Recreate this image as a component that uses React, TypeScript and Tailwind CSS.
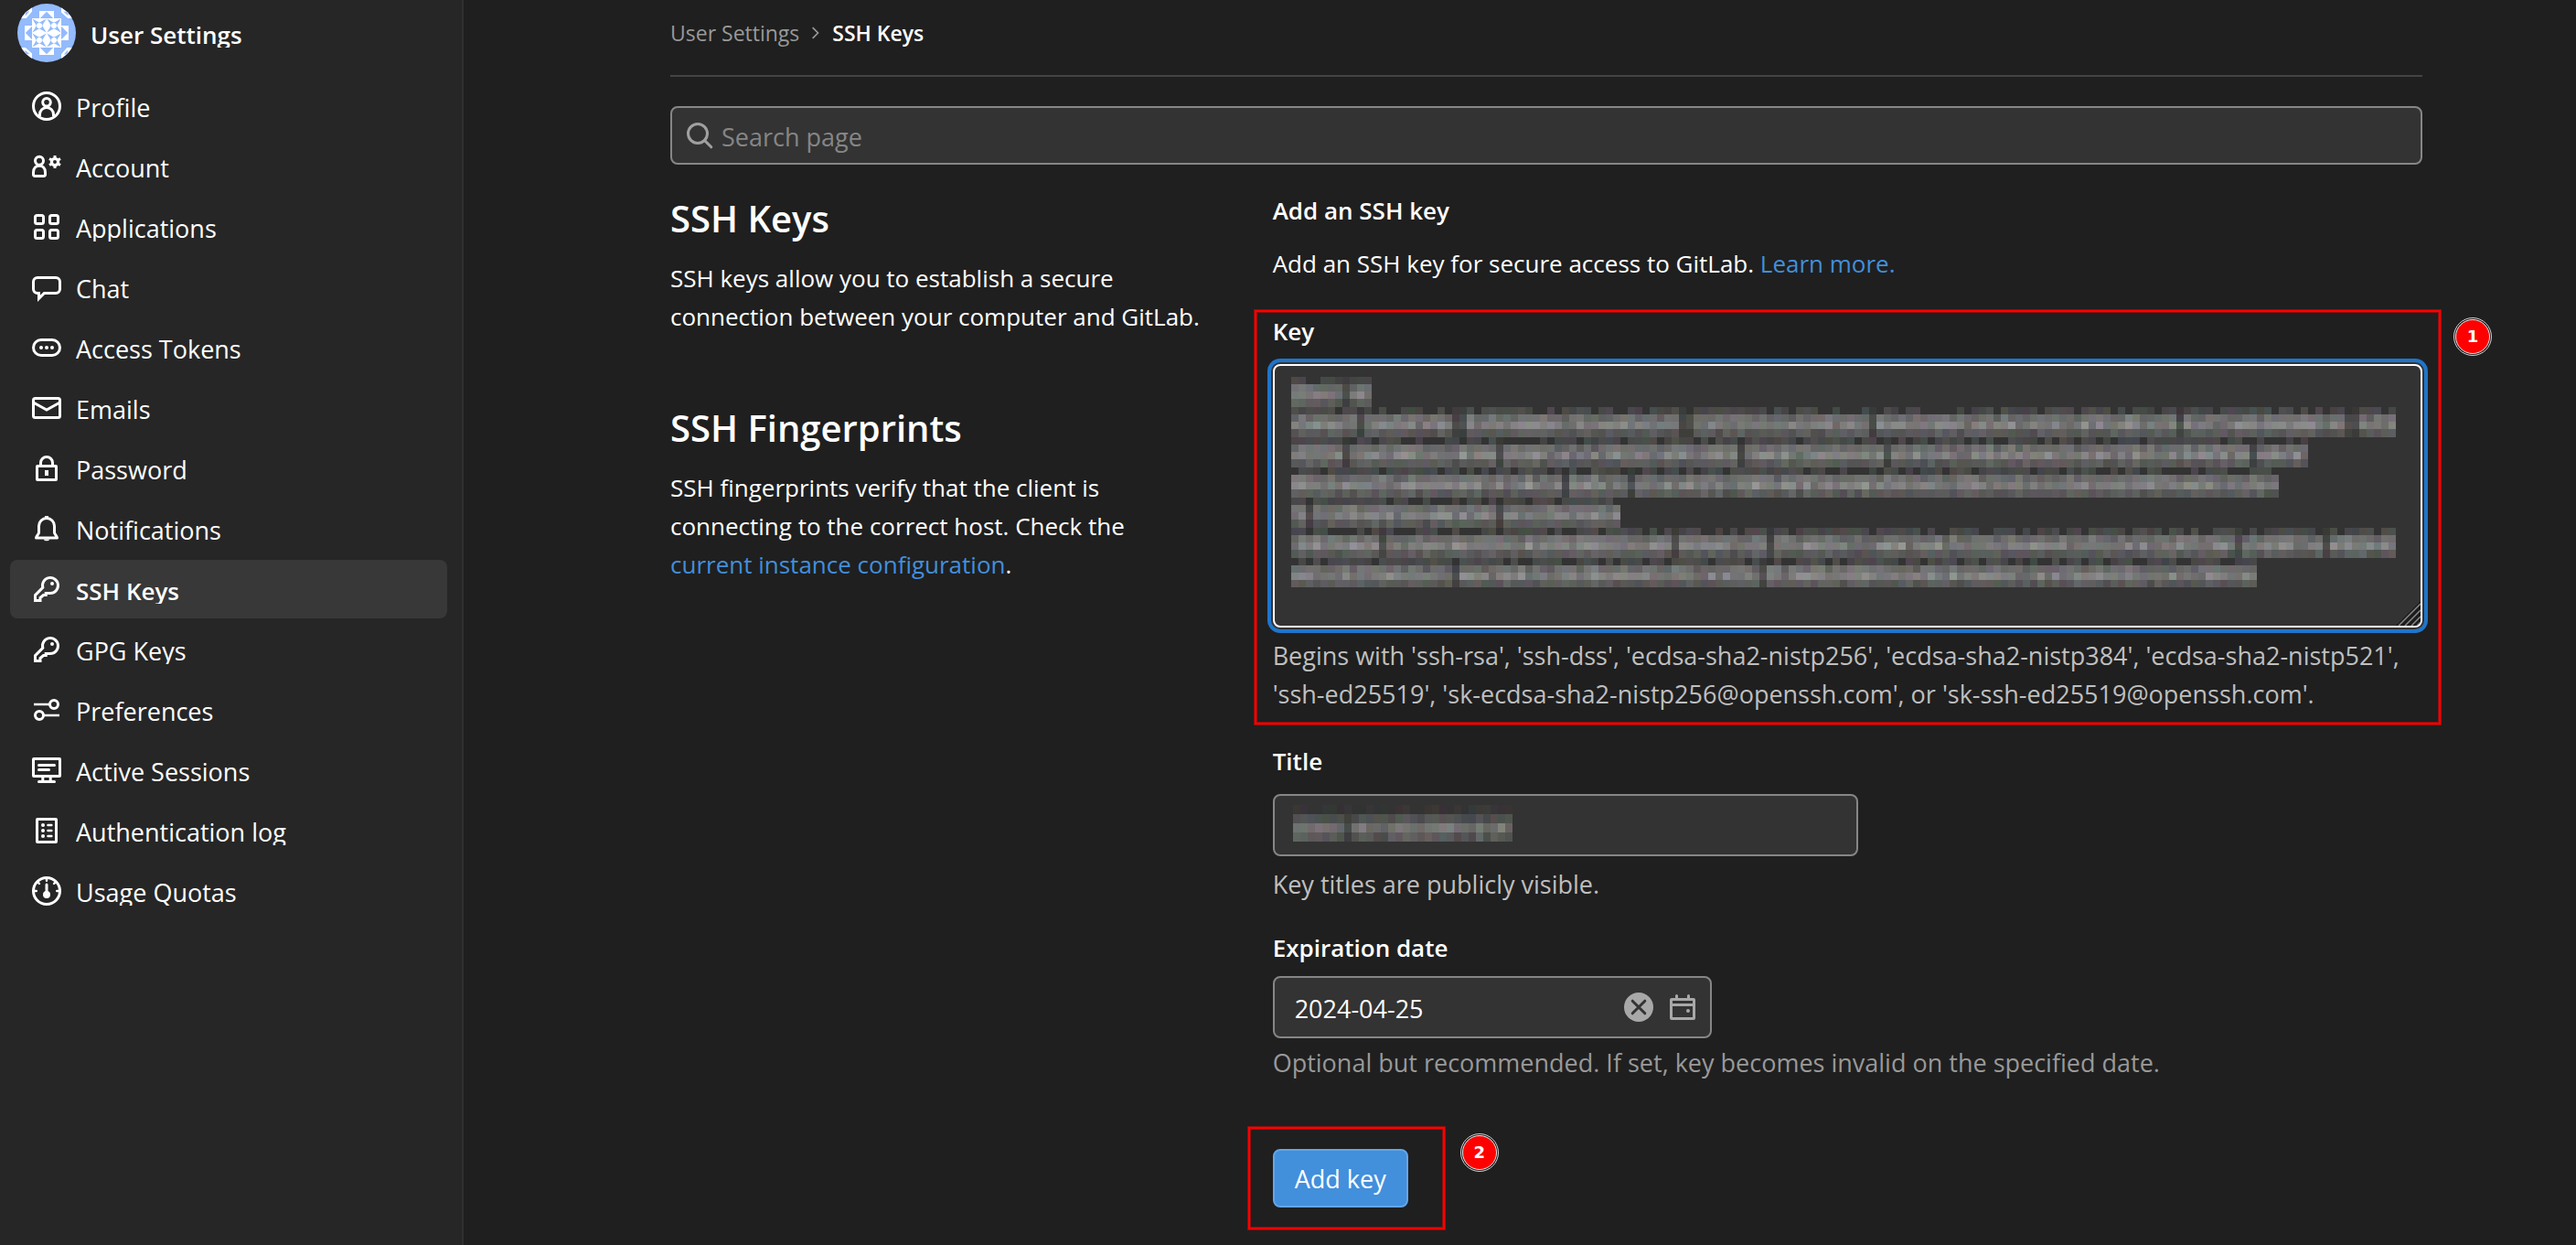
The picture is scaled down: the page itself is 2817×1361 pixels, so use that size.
import React from "react";

type IconProps = { className?: string; children: React.ReactNode };

function Icon({ className = "", children }: IconProps) {
  return (
    <svg
      viewBox="0 0 16 16"
      aria-hidden="true"
      className={`size-8 shrink-0 ${className}`}
      fill="none"
      stroke="currentColor"
      strokeWidth="1.5"
    >
      {children}
    </svg>
  );
}

const keyShape = (
  <>
    <path d="M10 10.25a4.25 4.25 0 1 0-4.1-3.1L1.75 11.3v2.95H4.5v-1.5l1.75-1.5H7.6v-1z" />
    <circle cx="11" cy="5" r="1" fill="currentColor" stroke="none" />
  </>
);

const navItems: { label: string; shape: React.ReactNode; active?: boolean }[] = [
  {
    label: "Profile",
    shape: (
      <>
        <circle cx="8" cy="8" r="7.25" />
        <circle cx="8" cy="5.9" r="2.15" />
        <path d="M4.25 13.6v-1.1a3.75 3.75 0 0 1 7.5 0v1.1" />
      </>
    ),
  },
  {
    label: "Account",
    shape: (
      <>
        <circle cx="4" cy="4.9" r="2.25" />
        <path d="M.75 11.2c0-2.4 1.4-3.6 3.25-3.6s3.25 1.2 3.25 3.6v1.3a.75.75 0 0 1-.75.75h-5a.75.75 0 0 1-.75-.75z" />
        <circle cx="12.5" cy="5.5" r="1.8" strokeWidth="1.6" />
        <path d="M12.5 2v1.4M12.5 7.6V9M9.5 3.75l1.2.7M14.3 6.55l1.2.7M9.5 7.25l1.2-.7M14.3 4.45l1.2-.7" />
      </>
    ),
  },
  {
    label: "Applications",
    shape: (
      <>
        <rect x="1.75" y="1.75" width="4.5" height="4.5" rx="1" />
        <rect x="9.75" y="1.75" width="4.5" height="4.5" rx="1" />
        <rect x="1.75" y="9.75" width="4.5" height="4.5" rx="1" />
        <rect x="9.75" y="9.75" width="4.5" height="4.5" rx="1" />
      </>
    ),
  },
  {
    label: "Chat",
    shape: (
      <path d="M3 2.75h10A2.25 2.25 0 0 1 15.25 5v4A2.25 2.25 0 0 1 13 11.25H6.7l-2.95 2.9v-2.9H3A2.25 2.25 0 0 1 .75 9V5A2.25 2.25 0 0 1 3 2.75z" />
    ),
  },
  {
    label: "Access Tokens",
    shape: (
      <>
        <rect x=".75" y="3.75" width="14.5" height="8.5" rx="4.25" />
        <g fill="currentColor" stroke="none">
          <circle cx="5" cy="8" r="1" />
          <circle cx="8" cy="8" r="1" />
          <circle cx="11" cy="8" r="1" />
        </g>
      </>
    ),
  },
  {
    label: "Emails",
    shape: (
      <>
        <rect x=".75" y="2.75" width="14.5" height="10.5" rx="1" />
        <path d="M.75 5 8 9l7.25-4" />
      </>
    ),
  },
  {
    label: "Password",
    shape: (
      <>
        <rect x="2.75" y="6.75" width="10.5" height="7.5" rx=".25" />
        <path d="M4.75 6.5V5a3.25 3.25 0 0 1 6.5 0v1.5" />
        <rect x="7" y="9" width="2" height="3" fill="currentColor" stroke="none" />
      </>
    ),
  },
  {
    label: "Notifications",
    shape: (
      <>
        <path
          strokeLinejoin="round"
          d="M3.75 6.5a4.25 4.25 0 0 1 8.5 0v3.6c0 .8 1.3 1.6 1.5 2.9H2.25c.2-1.3 1.5-2.1 1.5-2.9z"
        />
        <path d="M8 1v1.2" strokeWidth="2" />
        <path d="M6.3 13.7h3.4a1.8 1.4 0 0 1-3.4 0z" fill="currentColor" stroke="none" />
      </>
    ),
  },
  { label: "SSH Keys", shape: keyShape, active: true },
  { label: "GPG Keys", shape: keyShape },
  {
    label: "Preferences",
    shape: (
      <>
        <circle cx="12" cy="5" r="2.25" />
        <circle cx="4" cy="11" r="2.25" />
        <path d="M1 5h8.75M6.25 11H15" strokeWidth="1.3" />
      </>
    ),
  },
  {
    label: "Active Sessions",
    shape: (
      <>
        <rect x=".75" y="1.75" width="14.5" height="9.5" rx=".25" />
        <path strokeLinecap="round" d="M3.75 5.25h8.5M3.75 7.75h5.5M3.75 14.25h8.5" />
        <path d="M5.9 11.5V14M10.1 11.5V14" />
      </>
    ),
  },
  {
    label: "Authentication log",
    shape: (
      <>
        <rect x="2.75" y="1.75" width="10.5" height="12.5" rx=".25" />
        <path strokeLinecap="round" strokeWidth="1.3" d="M8.75 5h1.9M8.75 8h1.9M8.75 11h1.9" />
        <g fill="currentColor" stroke="none">
          <circle cx="6" cy="5" r="1" />
          <circle cx="6" cy="8" r="1" />
          <circle cx="6" cy="11" r="1" />
        </g>
      </>
    ),
  },
  {
    label: "Usage Quotas",
    shape: (
      <>
        <circle cx="8" cy="8" r="7.25" />
        <path strokeLinecap="round" d="M8 4.5V10" />
        <circle cx="8" cy="10" r="2" fill="currentColor" stroke="none" />
        <path
          strokeLinecap="round"
          strokeWidth="1.2"
          d="M8 1.5v.9M1.5 8h.9M13.6 8h.9M3.4 3.4l.6.6M12.6 3.4l-.6.6"
        />
      </>
    ),
  },
];

function Avatar() {
  const quadrant = "M.05.05 1 .6 1.95.05 1.4 1l.55.95L1 1.4l-.95.55L.6 1z";
  return (
    <svg viewBox="0 0 8 8" aria-hidden="true" className="size-16 shrink-0 rounded-full bg-[#93bbfd]">
      {[0, 90, 180, 270].map((turn) => (
        <g key={turn} transform={`rotate(${turn} 4 4)`}>
          <path d="M3 1h2v1H3z" fill="#fff" />
          <path d="M4 1.1 4.9 2H3.1z" fill="#93bbfd" />
          <path d="M2 0v2H.4L1 1h.1L1.6.4z" fill="#fff" />
          <path d="M1.1 1.05h.55L1.1 1.7zM1.2 2l.8-.9V2z" fill="#93bbfd" />
        </g>
      ))}
      <path d="M2 2h4v4H2z" fill="#fff" />
      {[
        [2, 2],
        [4, 2],
        [2, 4],
        [4, 4],
      ].map(([x, y]) => (
        <g key={`${x}-${y}`} transform={`translate(${x} ${y})`}>
          <path d={quadrant} fill="#93bbfd" />
          <circle cx="1" cy="1" r=".38" fill="#fff" />
        </g>
      ))}
    </svg>
  );
}

/* Deterministic noise in the range 0..1 */
function noise(a: number, b: number) {
  const v = Math.sin(a * 127.1 + b * 311.7 + 17.3) * 43758.5453;
  return v - Math.floor(v);
}

type MosaicProps = {
  lines: number[];
  cellHeight: number;
  pitch: number;
  levels: number[];
  className: string;
};

/* Censored text: each line is a band of grey cells, one brightness level per cell row */
function Mosaic({ lines, cellHeight, pitch, levels, className }: MosaicProps) {
  const cell = 8;
  const width = Math.max(...lines);
  const height = (lines.length - 1) * pitch + levels.length * cellHeight;
  const cells: React.ReactNode[] = [];
  lines.forEach((lineWidth, line) => {
    const columns = Math.round(lineWidth / cell);
    levels.forEach((level, row) => {
      for (let col = 0; col < columns; col++) {
        const n = noise(col + line * 57, row);
        if (row === 0 && n < 0.3) continue;
        const strength = noise(col, line * 7 + 3);
        const gap = strength < 0.03 ? 0.4 : 1;
        const base = 51 + (level - 51) * (0.68 + n * 0.4 + strength * 0.25) * gap;
        const tint = (k: number) => Math.round(base + (noise(col + k * 31, line * 5 + row) - 0.5) * 12);
        cells.push(
          <rect
            key={`${line}-${row}-${col}`}
            x={col * cell}
            y={line * pitch + row * cellHeight}
            width={cell}
            height={row === levels.length - 1 ? pitch - cellHeight * row : cellHeight}
            fill={`rgb(${tint(1)},${tint(2)},${tint(3)})`}
          />,
        );
      }
    });
  });
  return (
    <svg
      aria-hidden="true"
      width={width}
      height={height}
      viewBox={`0 0 ${width} ${height}`}
      shapeRendering="crispEdges"
      className={`pointer-events-none absolute ${className}`}
    >
      {cells}
    </svg>
  );
}

function Marker({ label, className }: { label: string; className: string }) {
  return (
    <span
      className={`absolute left-full flex size-[42px] items-center justify-center rounded-full border border-[#d0d0d0] p-px ${className}`}
    >
      <span className="flex size-full items-center justify-center rounded-full border border-[#e8e8e8] bg-[#ff0000] font-['DejaVu_Sans',sans-serif] text-lg leading-none font-bold text-white">
        {label}
      </span>
    </span>
  );
}

function Frame({ className }: { className: string }) {
  return (
    <span
      aria-hidden="true"
      className={`pointer-events-none absolute border-2 border-[#ff0000] shadow-[0_0_0_1px_#8f0f0f,inset_0_0_0_1px_#8f0f0f] ${className}`}
    />
  );
}

export default function App() {
  return (
    <div className="flex min-h-screen bg-[#1f1f1f] font-['Open_Sans',sans-serif] text-[26px] leading-[42px] text-white">
      <aside className="w-[507px] shrink-0 border-r-2 border-[#303030] bg-[#262626] pt-1 text-[27px]">
        <div className="flex items-center gap-4 pl-[19px]">
          <Avatar />
          <div className="pt-1">
            <h2 className="truncate text-[26px] leading-7 font-semibold">User Settings</h2>
          </div>
        </div>
        <nav aria-label="User settings" className="mt-4 mr-4 ml-[11px]">
          <ul className="flex flex-col gap-0.5">
            {navItems.map((item) => (
              <li key={item.label}>
                <a
                  href="#"
                  aria-current={item.active ? "page" : undefined}
                  className={`flex h-16 items-center gap-4 rounded-lg px-6 ${
                    item.active ? "bg-[#383838] text-[26px] font-semibold" : ""
                  }`}
                >
                  <Icon>{item.shape}</Icon>
                  <span className="pt-1">
                    <span className="block truncate leading-7">{item.label}</span>
                  </span>
                </a>
              </li>
            ))}
          </ul>
        </nav>
      </aside>

      <main className="min-w-0 flex-1 pr-[168px] pb-10 pl-[226px]">
        <nav aria-label="Breadcrumb" className="border-b-2 border-[#444] pb-[10px]">
          <ol className="flex h-[72px] items-center gap-2 text-[23px]">
            <li>
              <a href="#" className="text-[#999]">
                User Settings
              </a>
            </li>
            <li aria-hidden="true" className="text-[#999]">
              <svg viewBox="0 0 24 24" className="size-5" fill="none" stroke="currentColor" strokeWidth="2">
                <path d="m8 5 7 7-7 7" />
              </svg>
            </li>
            <li>
              <a href="#" aria-current="page" className="font-semibold">
                SSH Keys
              </a>
            </li>
          </ol>
        </nav>

        <div className="relative mt-8">
          <Icon className="pointer-events-none absolute top-4 left-4 text-[#a0a0a0]">
            <circle cx="7" cy="7" r="5.25" />
            <path d="m10.8 10.8 3.6 3.6" strokeLinecap="round" />
          </Icon>
          <input
            type="search"
            aria-label="Search page"
            placeholder="Search page"
            className="block h-16 w-full rounded-lg border-2 border-[#868686] bg-[#333] pt-0.5 pr-6 pl-[54px] text-[27px] placeholder:text-[#868686]"
          />
        </div>

        <div className="mt-[29px] grid grid-cols-3 gap-[60px]">
          <div className="pt-1.5">
            <section>
              <h1 className="mb-5 text-[40px] leading-[48px] font-semibold">SSH Keys</h1>
              <p>SSH keys allow you to establish a secure connection between your computer and GitLab.</p>
            </section>
            <section className="mt-[77px]">
              <h2 className="mb-5 text-[40px] leading-[48px] font-semibold">SSH Fingerprints</h2>
              <p>
                SSH fingerprints verify that the client is connecting to the correct host. Check the{" "}
                <span className="whitespace-nowrap">
                  <a href="#" className="text-[#428fdc]">
                    current instance configuration
                  </a>
                  .
                </span>
              </p>
            </section>
          </div>

          <form className="col-span-2" onSubmit={(event) => event.preventDefault()}>
            <h3 className="mb-4 font-semibold">Add an SSH key</h3>
            <p className="mb-8">
              Add an SSH key for secure access to GitLab.{" "}
              <a href="#" className="text-[#428fdc]">
                Learn more.
              </a>
            </p>

            <div className="relative">
              <Frame className="-top-0.5 -right-5 -bottom-3 -left-5" />
              <Marker label="1" className="top-1.5 ml-[34px]" />
              <label htmlFor="key" className="mb-[15px] block font-semibold">
                Key
              </label>
              <div className="relative">
                <textarea
                  id="key"
                  aria-describedby="key-help"
                  className="block h-72 w-full resize-none rounded-lg border-2 border-white bg-[#333] px-6 py-4 shadow-[0_0_0_2px_#333,0_0_0_6px_#1f75cb] outline-none"
                />
                <Mosaic
                  className="top-3.5 left-5"
                  lines={[88, 1208, 1112, 1080, 356, 1208, 1056]}
                  cellHeight={8}
                  pitch={33}
                  levels={[72, 108, 124, 90]}
                />
                <svg
                  viewBox="0 0 28 28"
                  aria-hidden="true"
                  className="pointer-events-none absolute right-0.5 bottom-0.5 size-7 rounded-br-md"
                >
                  <path d="M28 1v27H1z" fill="#1c1c1c" />
                  <path
                    d="M28 4 4 28M28 11 11 28M28 18 18 28M28 24l-4 4"
                    stroke="#8a8a8a"
                    strokeWidth="1.5"
                  />
                </svg>
              </div>
              <p id="key-help" className="mt-2.5 text-[27px] text-[#bfbfbf]">
                Begins with 'ssh-rsa', 'ssh-dss', 'ecdsa-sha2-nistp256', 'ecdsa-sha2-nistp384', 'ecdsa-sha2-nistp521',
                'ssh-ed25519', 'sk-ecdsa-sha2-nistp256@openssh.com', or 'sk-ssh-ed25519@openssh.com'.
              </p>
            </div>

            <div className="mt-[31px]">
              <label htmlFor="title" className="mb-[15px] block font-semibold">
                Title
              </label>
              <div className="relative w-[640px] max-w-full">
                <input
                  id="title"
                  type="text"
                  aria-describedby="title-help"
                  className="block h-[68px] w-full rounded-lg border-2 border-[#868686] bg-[#333] px-[22px]"
                />
                <Mosaic
                  className="top-3 left-[22px]"
                  lines={[240]}
                  cellHeight={10}
                  pitch={40}
                  levels={[54, 80, 114, 88]}
                />
              </div>
              <p id="title-help" className="mt-2.5 text-[27px] text-[#bfbfbf]">
                Key titles are publicly visible.
              </p>
            </div>

            <div className="mt-[27px]">
              <label htmlFor="expires" className="mb-2.5 block font-semibold">
                Expiration date
              </label>
              <div className="relative w-[480px] max-w-full">
                <input
                  id="expires"
                  type="text"
                  defaultValue="2024-04-25"
                  aria-describedby="expires-help"
                  className="block h-[68px] w-full rounded-lg border-2 border-[#868686] bg-[#333] pt-0.5 pr-28 pl-[22px] text-[27px]"
                />
                <div className="absolute inset-y-0 right-4 flex items-center gap-4 text-[#a8a8a8]">
                  <button type="button" aria-label="Clear date">
                    <Icon>
                      <circle cx="8" cy="8" r="8" fill="currentColor" stroke="none" />
                      <path d="m4.6 4.6 6.8 6.8M11.4 4.6l-6.8 6.8" stroke="#333" strokeLinecap="round" />
                    </Icon>
                  </button>
                  <button type="button" aria-label="Open calendar">
                    <Icon>
                      <rect x="1.75" y="3.75" width="12.5" height="10.5" rx=".25" />
                      <path d="M1.75 6.75h12.5" />
                      <path d="M4.75 1.75v2M11.25 1.75v2" strokeLinecap="round" />
                      <circle cx="11" cy="10" r="1" fill="currentColor" stroke="none" />
                    </Icon>
                  </button>
                </div>
              </div>
              <p id="expires-help" className="mt-1.5 text-[27px] text-[#999]">
                Optional but recommended. If set, key becomes invalid on the specified date.
              </p>
            </div>

            <div className="relative mt-[73px] w-fit">
              <Frame className="-top-6 -right-10 -bottom-6 -left-[27px]" />
              <Marker label="2" className="-top-[17px] ml-[57px]" />
              <button
                type="submit"
                className="block h-16 rounded-lg border-2 border-[#63a6e9] bg-[#428fdc] px-[22px] pt-0.5 text-[27px]"
              >
                Add key
              </button>
            </div>
          </form>
        </div>
      </main>
    </div>
  );
}
